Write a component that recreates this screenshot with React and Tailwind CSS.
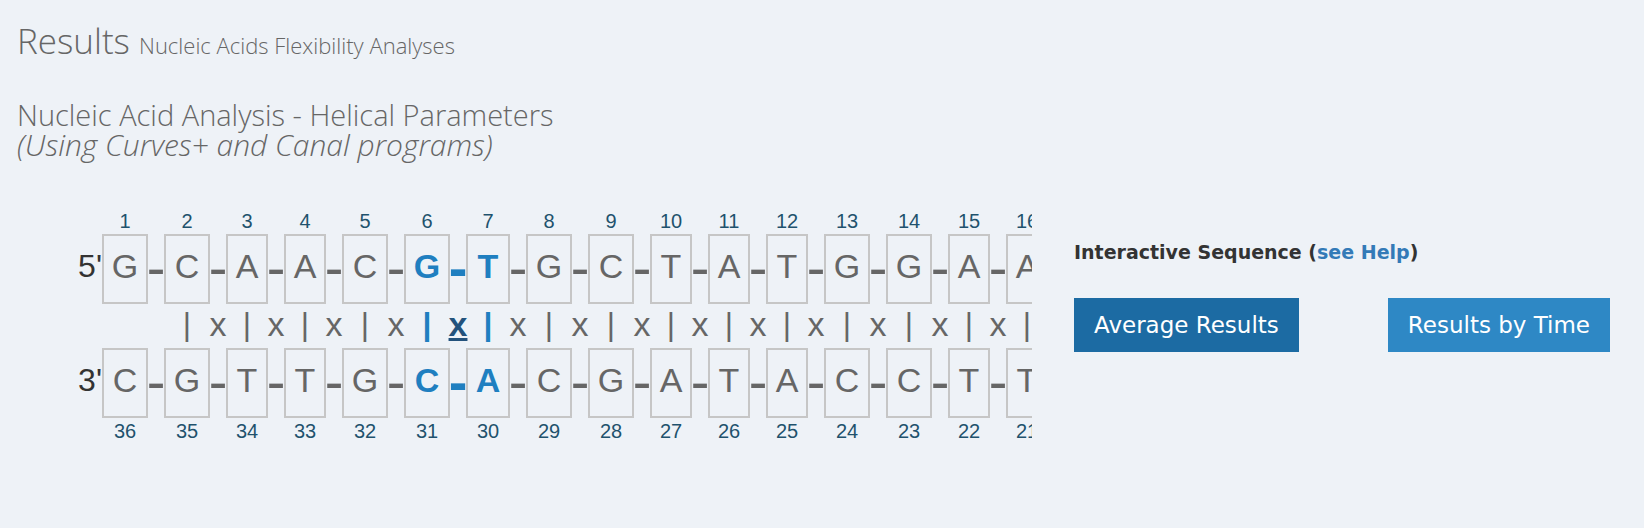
import React from "react";

const PAIRS = [
  ["G", "C"], ["C", "G"], ["A", "T"], ["A", "T"], ["C", "G"], ["G", "C"],
  ["T", "A"], ["G", "C"], ["C", "G"], ["T", "A"], ["A", "T"], ["T", "A"],
  ["G", "C"], ["G", "C"], ["A", "T"], ["A", "T"],
];
const TOTAL = 36;
const ACTIVE_STEP = 6;

const isActive = (n) => n === ACTIVE_STEP || n === ACTIVE_STEP + 1;

function columnWidth(pair, active) {
  if (pair.includes("G")) return "w-[46px]";
  return active ? "w-[44px]" : "w-[42px]";
}

function Base({ letter, position, active }) {
  return (
    <a
      href={`#base-${position}`}
      className={`flex h-[70px] w-full justify-center border-2 border-[#c6c6c6] pt-3 text-[34px] leading-9 ${
        active ? "font-bold text-[#1f7fc0]" : "text-[#666]"
      }`}
    >
      {letter}
    </a>
  );
}

function PairColumn({ pair, n }) {
  const active = isActive(n);
  return (
    <div className={`flex shrink-0 flex-col items-center ${columnWidth(pair, active)}`}>
      <span className="h-[26px] text-xl leading-[26px] text-[#1f526d]">{n}</span>
      <Base letter={pair[0]} position={n} active={active} />
      <span
        className={`h-11 text-[32px] leading-10 ${
          active ? "font-bold text-[#1f7fc0]" : "text-[#666]"
        }`}
      >
        {n > 1 ? "|" : ""}
      </span>
      <Base letter={pair[1]} position={TOTAL + 1 - n} active={active} />
      <span className="h-[26px] text-xl leading-[26px] text-[#1f526d]">{TOTAL + 1 - n}</span>
    </div>
  );
}

function Dash({ active }) {
  return (
    <span
      className={`flex h-[70px] justify-center text-[56px] leading-[68px] ${
        active ? "font-bold text-[#1f7fc0]" : "text-[#666]"
      }`}
    >
      -
    </span>
  );
}

function StepColumn({ n }) {
  const active = n === ACTIVE_STEP;
  return (
    <div className="flex w-4 shrink-0 flex-col items-center pt-[26px]">
      <Dash active={active} />
      <span className="flex h-11 justify-center text-[34px] leading-10">
        {n > 1 && (
          <a
            href={`#step-${n}`}
            className={active ? "font-bold text-[#23527c] underline" : "text-[#666]"}
          >
            x
          </a>
        )}
      </span>
      <Dash active={active} />
    </div>
  );
}

function Sequence() {
  return (
    <div className="flex min-w-0 flex-1 overflow-hidden pl-[78px] font-['Liberation_Sans',Arial,sans-serif]">
      <div className="flex w-6 shrink-0 flex-col items-end pt-[26px] text-[32px] leading-9 text-[#333]">
        <span className="h-[114px] pt-[14px]">5'</span>
        <span className="h-[70px] pt-[14px]">3'</span>
      </div>
      {PAIRS.map((pair, i) => (
        <React.Fragment key={i}>
          {i > 0 && <StepColumn n={i} />}
          <PairColumn pair={pair} n={i + 1} />
        </React.Fragment>
      ))}
    </div>
  );
}

export default function App() {
  return (
    <main className="min-h-screen bg-[#eef2f7] pt-4 font-['Open_Sans',sans-serif] text-[#666]">
      <header className="px-[17px]">
        <h1 className="text-[35px] leading-[50px] font-light">
          Results <small className="text-[22px]">Nucleic Acids Flexibility Analyses</small>
        </h1>
        <h2 className="mt-[30px] text-[29px] leading-[30px] font-light">
          Nucleic Acid Analysis - Helical Parameters
          <br />
          <em className="text-[30px]">(Using Curves+ and Canal programs)</em>
        </h2>
      </header>
      <section className="mt-12 flex gap-[42px] pr-[34px]">
        <Sequence />
        <div className="w-[536px] shrink-0 pt-8 font-['DejaVu_Sans',Verdana,sans-serif]">
          <p className="text-[19px] leading-6 font-bold text-[#333]">
            Interactive Sequence (
            <a href="#help" className="text-[#337ab7]">
              see Help
            </a>
            )
          </p>
          <div className="mt-[34px] flex justify-between text-[23px] text-white">
            <button type="button" className="h-[54px] bg-[#1c6ba3] px-5">
              Average Results
            </button>
            <button type="button" className="h-[54px] bg-[#2e88c5] px-5">
              Results by Time
            </button>
          </div>
        </div>
      </section>
    </main>
  );
}
